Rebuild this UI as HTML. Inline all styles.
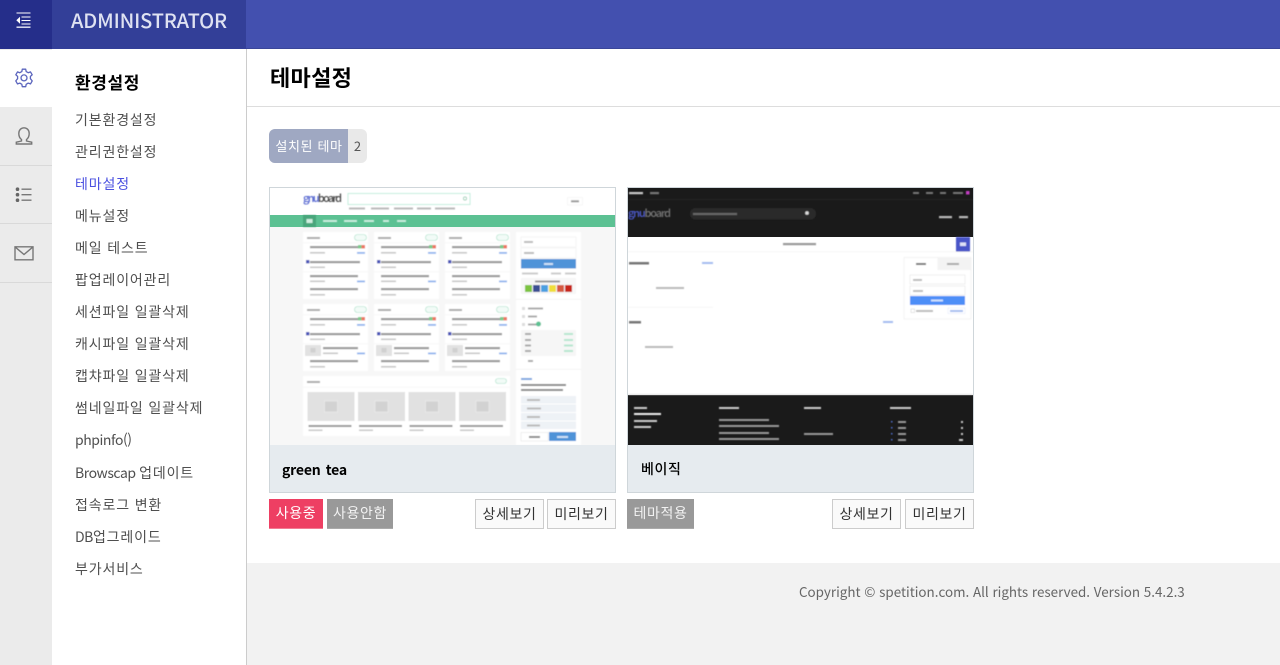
<!DOCTYPE html>
<html lang="ko"><head><meta charset="utf-8"><title>테마설정</title>
<style>
*{box-sizing:border-box}
html,body{margin:0;padding:0;width:1280px;height:665px;overflow:hidden;background:#fff;font-family:"Noto Sans CJK KR","Liberation Sans",sans-serif;color:#555}
.a{position:absolute}
.hd{left:0;top:0;width:1280px;height:49px;background:#4350af;border-bottom:1px solid #3a4699}
.m{left:75px;font-size:14px;letter-spacing:.85px;line-height:20px;color:#4f4f4f;white-space:nowrap}
.l{letter-spacing:-.45px}
.btn{height:30px;font-size:14px;line-height:28px;text-align:center;letter-spacing:.65px;white-space:nowrap}
.w{background:#fafafa;border:1px solid #ccc;color:#333}
.g{background:#999;color:#f2f2f2;border-bottom:1px solid #aaa}
.th{top:187px;width:347px;height:306px;border:1px solid #cfd6da;background:#e6ebef}
svg{display:block}
svg text{font-family:"Noto Sans CJK KR","Liberation Sans",sans-serif}
</style></head><body>
<div class="a hd"></div>
<div class="a" style="left:0;top:0;width:52px;height:49px;background:#252e8a"></div>
<div class="a" style="left:52px;top:0;width:194px;height:49px;background:#333f98"></div>
<svg class="a" style="left:14px;top:10px" width="18" height="20" viewBox="0 0 18 20"><path d="M2.500 3H16.500M7.500 7H16.500M7.500 10.500H16.500M7.500 14H16.500" stroke="#fff" stroke-width="1.100" fill="none"/><path d="M2.500 17.200H16.500" stroke="#dcdff0" stroke-width="1.500"/><path d="M6 6.800V13.800L2.300 10.300Z" fill="#fff"/></svg>
<div class="a" style="left:71px;top:6px;font-size:20px;font-weight:500;line-height:28px;color:#dfe2f2;letter-spacing:-.15px;white-space:nowrap">ADMINISTRATOR</div>

<div class="a" style="left:0;top:49px;width:52px;height:616px;background:#ebebeb"></div>
<div class="a" style="left:0;top:50px;width:52px;height:57px;background:#fff"></div>
<div class="a" style="left:0;top:165px;width:52px;height:1px;background:#d9d9d9"></div>
<div class="a" style="left:0;top:223px;width:52px;height:1px;background:#d9d9d9"></div>
<div class="a" style="left:0;top:282px;width:52px;height:1px;background:#d9d9d9"></div>
<div class="a" style="left:52px;top:49px;width:195px;height:616px;background:#fff;border-right:1px solid #ccc"></div>

<svg class="a" style="left:14px;top:67.500px" width="20" height="20" viewBox="0 0 20 20" fill="none" stroke="#5a64bd" stroke-width="1.300"><path d="M8.300 1.200H11.700L12.200 3.600L14.200 4.700L16.500 3.900L18.200 6.800L16.400 8.400V10.700L18.200 12.900L16.500 15.900L14.200 15.100L12.200 16.300L11.700 18.700H8.300L7.800 16.300L5.800 15.100L3.500 15.900L1.800 12.900L3.600 10.700V8.400L1.800 6.800L3.500 3.900L5.800 4.700L7.800 3.600Z" stroke-linejoin="round"/><circle cx="10" cy="9.900" r="3"/></svg>
<svg class="a" style="left:15px;top:126px" width="18" height="20" viewBox="0 0 18 20" fill="none" stroke="#777" stroke-width="1.400"><path d="M6.500 13.500C4.500 12 3.800 9.800 3.800 7.500C3.800 4 6 1.800 9 1.800S14.200 4 14.200 7.500C14.200 9.800 13.500 12 11.500 13.500V15L16.700 16.200V18H1.300V16.200L6.500 15Z"/></svg>
<svg class="a" style="left:15px;top:186px" width="18" height="18" viewBox="0 0 18 18"><g fill="#666"><circle cx="2.500" cy="3.200" r="1.800"/><circle cx="2.500" cy="8.700" r="1.800"/><circle cx="2.500" cy="14.200" r="1.800"/></g><path d="M6.500 3.200H16.500M6.500 8.700H16.500M6.500 14.200H16.500" stroke="#777" stroke-width="1.300"/></svg>
<svg class="a" style="left:14px;top:245px" width="20" height="16" viewBox="0 0 20 16" fill="none" stroke="#777" stroke-width="1.400"><path d="M1 1.800H19V14.800H1Z"/><path d="M1.500 2.300L10 9.500L18.500 2.300"/></svg>

<div class="a" style="left:75px;top:70px;font-size:17px;font-weight:700;line-height:24px;color:#000;white-space:nowrap;letter-spacing:.6px">환경설정</div>
<div class="a m" style="top:110px">기본환경설정</div>
<div class="a m" style="top:142px">관리권한설정</div>
<div class="a m" style="top:174px;color:#4a50e0">테마설정</div>
<div class="a m" style="top:206px">메뉴설정</div>
<div class="a m" style="top:238px">메일 테스트</div>
<div class="a m" style="top:270px">팝업레이어관리</div>
<div class="a m" style="top:302px">세션파일 일괄삭제</div>
<div class="a m" style="top:334px">캐시파일 일괄삭제</div>
<div class="a m" style="top:366px">캡챠파일 일괄삭제</div>
<div class="a m" style="top:398px">썸네일파일 일괄삭제</div>
<div class="a m l" style="top:430px">phpinfo()</div>
<div class="a m" style="top:463px"><span class="l">Browscap </span>업데이트</div>
<div class="a m" style="top:495px">접속로그 변환</div>
<div class="a m" style="top:527px"><span class="l">DB</span>업그레이드</div>
<div class="a m" style="top:559px">부가서비스</div>

<div class="a" style="left:270px;top:60px;font-size:22px;font-weight:700;line-height:34px;color:#000;letter-spacing:.3px;white-space:nowrap">테마설정</div>
<div class="a" style="left:247px;top:106px;width:1033px;height:1px;background:#ddd"></div>

<div class="a" style="left:269px;top:129px;width:98px;height:34px;border-radius:6px;background:#e9e9e9;overflow:hidden">
<div class="a" style="left:0;top:0;width:79px;height:34px;background:#9fa8c2;color:#fff;font-size:13px;line-height:33px;text-align:center;letter-spacing:.65px;padding-left:1px;white-space:nowrap">설치된 테마</div>
<div class="a" style="left:79px;top:0;width:19px;height:34px;color:#555;font-size:13px;line-height:33px;text-align:center">2</div>
</div>

<div class="a th" style="left:269px">
<svg class="a" style="left:0;top:0" width="345" height="257" viewBox="0 0 345 257">
<defs>
<filter id="b" x="-2%" y="-2%" width="104%" height="104%"><feGaussianBlur stdDeviation=".5"/></filter>
<g id="head"><rect width="65" height="67" fill="#fff"/><rect x="4" y="5" width="13" height="2" fill="#aaa"/><rect x="51.500" y="2.500" width="12" height="6" rx="3" fill="#f2fbf7" stroke="#a5e0c6" stroke-width=".6"/><rect x="0" y="10.500" width="65" height=".5" fill="#f1f1f1"/></g>
<g id="rows"><rect x="7" y="29" width="50" height="2.200" fill="#999"/><rect x="3" y="28" width="3.400" height="3.400" fill="#4a55b8"/><rect x="7" y="34.500" width="15" height="1.600" fill="#c8c8c8"/><rect y="39.500" width="65" height=".5" fill="#f1f1f1"/><rect x="7" y="56" width="48" height="2.200" fill="#999"/><rect x="7" y="62" width="15" height="1.600" fill="#c8c8c8"/></g>
<g id="top"><rect x="7" y="14" width="48" height="2.200" fill="#999"/><rect x="55" y="13" width="3.500" height="3.500" fill="#7ccb8c"/><rect x="58.500" y="13" width="3.500" height="3.500" fill="#ec7763"/><rect x="7" y="20" width="15" height="1.600" fill="#c8c8c8"/><rect x="54" y="20" width="8" height="1.800" fill="#8fb4ee"/></g>
<g id="c1"><use href="#head"/><use href="#top"/><use href="#rows"/><rect x="7" y="43" width="48" height="2.200" fill="#999"/><rect x="7" y="48.500" width="15" height="1.600" fill="#c8c8c8"/><rect x="54" y="48.500" width="8" height="1.800" fill="#8fb4ee"/></g>
<g id="c2"><use href="#head"/><use href="#top"/><use href="#rows"/><rect x="2" y="41" width="16" height="11" fill="#e2e2e2"/><rect x="7.500" y="44" width="5" height="4.500" fill="#d0d0d0"/><rect x="20" y="43" width="35" height="2.200" fill="#999"/><rect x="20" y="48.500" width="15" height="1.600" fill="#c8c8c8"/><rect x="54" y="48.500" width="8" height="1.800" fill="#8fb4ee"/></g>
<g id="pic"><rect width="47" height="29" fill="#e1e1e1"/><rect x="17" y="9" width="13" height="11" fill="#d2d2d2" stroke="#ececec" stroke-width=".7"/><rect x="1" y="33" width="43" height="2" fill="#999"/><rect x="1" y="37.500" width="14" height="1.500" fill="#c8c8c8"/></g>
</defs>
<rect width="345" height="257" fill="#f7f7f7"/>
<rect width="345" height="27" fill="#fff"/>
<rect y="27" width="345" height="12" fill="#5cc193"/>
<g filter="url(#b)">
<text x="33" y="14" font-size="11" font-weight="500" fill="#444" textLength="39"><tspan fill="#5566d0">gnu</tspan>board</text>
<rect x="78" y="5.500" width="122" height="11" fill="#fff" stroke="#c4eedd" stroke-width="1"/>
<circle cx="195" cy="10.500" r="1.600" fill="none" stroke="#86c7a8" stroke-width=".7"/>
<rect x="79" y="19.500" width="16" height="2" fill="#bbb"/><rect x="101" y="19.500" width="18" height="2" fill="#bbb"/><rect x="124" y="19.500" width="19" height="2" fill="#bbb"/><rect x="147" y="19.500" width="14" height="2" fill="#bbb"/><rect x="165" y="19.500" width="20" height="2" fill="#bbb"/>
<rect x="297.500" y="9.500" width="15" height="7.500" fill="#fff" stroke="#eee" stroke-width=".5"/><rect x="301" y="12.300" width="8" height="2" fill="#999"/>
<rect x="33" y="27" width="13" height="12" fill="#4aa67c"/><rect x="36.500" y="31" width="6" height="4" fill="#cfeee0"/>
<g fill="#cfeee0"><rect x="53" y="32" width="14" height="2"/><rect x="74" y="32" width="13" height="2"/><rect x="94" y="32" width="10" height="2"/><rect x="113" y="32" width="6" height="2"/><rect x="127" y="32" width="9" height="2"/></g>
<use href="#c1" x="33" y="44"/><use href="#c1" x="104" y="44"/><use href="#c1" x="175" y="44"/>
<use href="#c2" x="33" y="116"/><use href="#c2" x="104" y="116"/><use href="#c2" x="175" y="116"/>
<rect x="33" y="188" width="207" height="60" fill="#fff"/><rect x="37" y="193" width="13" height="2" fill="#aaa"/><rect x="225.500" y="190.500" width="11" height="5" rx="2.500" fill="#f2fbf7" stroke="#a5e0c6" stroke-width=".6"/><rect x="33" y="199" width="207" height=".5" fill="#f1f1f1"/>
<use href="#pic" x="37.500" y="204"/><use href="#pic" x="88" y="204"/><use href="#pic" x="138.500" y="204"/><use href="#pic" x="189" y="204"/>
<rect x="246" y="44" width="65" height="213" fill="#fff"/>
<rect x="251" y="49" width="55" height="10" fill="#fff" stroke="#eee" stroke-width=".6"/><rect x="251" y="60" width="55" height="10" fill="#fff" stroke="#eee" stroke-width=".6"/>
<rect x="254" y="53" width="9" height="2" fill="#bbb"/><rect x="254" y="64" width="10" height="2" fill="#bbb"/>
<rect x="251" y="71" width="55" height="9.500" fill="#4f93d8"/><rect x="274" y="75" width="9" height="2" fill="#cfe2f5"/>
<rect x="252" y="84.500" width="16" height="2" fill="#ccc"/><rect x="281" y="84.500" width="10" height="2" fill="#ccc"/><rect x="295" y="84.500" width="11" height="2" fill="#ccc"/>
<rect x="251" y="90" width="55" height="16" fill="#f7f7f7"/><rect x="265" y="92.500" width="25" height="2" fill="#999"/>
<rect x="255" y="97" width="7" height="7" fill="#7cc341"/><rect x="263" y="97" width="7" height="7" fill="#3b4f93"/><rect x="271" y="97" width="7" height="7" fill="#4c9fe0"/><rect x="279" y="97" width="7" height="7" fill="#f0de3a"/><rect x="287" y="97" width="7" height="7" fill="#d65a42"/><rect x="295" y="97" width="7" height="7" fill="#c8281e"/>
<rect x="246" y="111" width="65" height=".7" fill="#f0f0f0"/>
<rect x="258" y="119.500" width="15" height="2" fill="#aaa"/><rect x="252" y="119" width="3" height="3" fill="#ddd"/>
<rect x="258" y="127.500" width="9" height="2" fill="#aaa"/><rect x="252" y="127" width="3" height="3" fill="#ddd"/>
<rect x="258" y="135.500" width="9" height="2" fill="#aaa"/><circle cx="268.500" cy="136" r="2.500" fill="#5cc193"/><rect x="252" y="135" width="3" height="3" fill="#ddd"/>
<rect x="251" y="142" width="55" height="26" fill="#f6f6f6"/>
<g fill="#b5e6cf"><rect x="294" y="145" width="9" height="2"/><rect x="294" y="151" width="9" height="2"/><rect x="294" y="156.500" width="9" height="2"/><rect x="294" y="162" width="9" height="2"/></g>
<g fill="#aaa"><rect x="255" y="145" width="6" height="2"/><rect x="255" y="151" width="6" height="2"/><rect x="255" y="156.500" width="6" height="2"/><rect x="255" y="162" width="6" height="2"/><rect x="258" y="172" width="5" height="2"/></g>
<rect x="246" y="181" width="65" height=".7" fill="#f0f0f0"/>
<rect x="251" y="190" width="11" height="2" fill="#7aa5e0"/><rect x="251" y="196" width="45" height="2" fill="#888"/><rect x="251" y="201" width="42" height="2" fill="#888"/>
<rect x="251" y="208" width="55" height="7.500" fill="#eef2f6"/><rect x="251" y="216.500" width="55" height="7.500" fill="#eef2f6"/><rect x="251" y="225" width="55" height="7.500" fill="#eef2f6"/><rect x="251" y="233.500" width="55" height="7.500" fill="#eef2f6"/>
<g fill="#bbb"><rect x="257" y="211" width="13" height="2"/><rect x="257" y="219.500" width="14" height="2"/><rect x="257" y="228" width="13" height="2"/><rect x="257" y="236.500" width="13" height="2"/></g>
<rect x="251" y="244.500" width="27" height="8.500" fill="#fff" stroke="#e5e5e5" stroke-width=".6"/><rect x="279" y="244" width="27" height="9" fill="#4f93d8"/><rect x="259" y="248" width="11" height="2" fill="#888"/><rect x="287" y="248" width="11" height="2" fill="#cfe2f5"/>
</g>
</svg>
<div class="a" style="left:12px;top:271px;font-size:14px;font-weight:700;line-height:22px;color:#000;letter-spacing:-.2px;word-spacing:1.500px;white-space:nowrap">green tea</div>
</div>
<div class="a btn" style="left:269px;top:499px;width:54px;background:#ee3f63;color:#fff;border-bottom:1px solid #f27a92">사용중</div>
<div class="a btn g" style="left:327px;top:499px;width:66px">사용안함</div>
<div class="a btn w" style="left:475px;top:499px;width:69px">상세보기</div>
<div class="a btn w" style="left:547px;top:499px;width:69px">미리보기</div>

<div class="a th" style="left:627px">
<svg class="a" style="left:0;top:0" width="345" height="257" viewBox="0 0 345 257">
<rect width="345" height="257" fill="#fff"/>
<rect width="345" height="49" fill="#1a1a1a"/>
<rect y="207" width="345" height="50" fill="#1a1a1a"/>
<g filter="url(#b)">
<rect y="11" width="345" height=".6" fill="#2c2c2c"/>
<rect x="1" y="4" width="14" height="2.200" fill="#ccc"/><rect x="22" y="4" width="9" height="2.200" fill="#777"/>
<g fill="#777"><rect x="285" y="4" width="6" height="2"/><rect x="298" y="4" width="7" height="2"/><rect x="312" y="4" width="6" height="2"/><rect x="325" y="4" width="10" height="2"/></g><rect x="338" y="3" width="3.500" height="3.500" fill="#c23cc2"/>
<text x="0" y="29" font-size="11" font-weight="500" fill="#777" textLength="43"><tspan fill="#4d5bd0">gnu</tspan>board</text>
<rect x="62" y="20" width="126" height="11.500" rx="5.700" fill="#2c2c2c"/><rect x="65" y="25" width="44" height="2" fill="#666"/><circle cx="179" cy="25" r="1.800" fill="#ddd"/>
<rect x="311" y="28" width="13" height="2.200" fill="#bbb"/><rect x="331" y="28" width="9" height="2.200" fill="#bbb"/>
<rect x="155" y="55" width="33" height="2.200" fill="#999"/>
<rect x="328" y="49" width="14" height="14.500" fill="#4a55c8"/><rect x="332" y="54.500" width="6" height="3.500" fill="#dfe1f7"/>
<rect y="63.500" width="345" height=".6" fill="#f0f0f0"/>
<rect x="1" y="74" width="20" height="2.500" fill="#777"/><rect x="74" y="74" width="11" height="2" fill="#a5bdf0"/>
<rect x="28" y="99" width="28" height="2" fill="#bbb"/>
<rect y="119" width="85" height=".6" fill="#f0f0f0"/>
<rect x="276" y="69.500" width="67" height="61.500" fill="#fff" stroke="#eee" stroke-width=".7"/><rect x="309.500" y="70" width="33.500" height="12" fill="#f3f3f3"/>
<rect x="288" y="75" width="10" height="2" fill="#777"/><rect x="319" y="75" width="12" height="2" fill="#aaa"/>
<rect x="282" y="87" width="55" height="9" fill="#fff" stroke="#e5e5e5" stroke-width=".6"/><rect x="282" y="98" width="55" height="9" fill="#fff" stroke="#e5e5e5" stroke-width=".6"/>
<rect x="285" y="91" width="9" height="2" fill="#bbb"/><rect x="285" y="102" width="10" height="2" fill="#bbb"/>
<rect x="282" y="108" width="55" height="9" fill="#4d8ef7"/><rect x="303" y="111.500" width="12" height="2" fill="#cfe0fc"/>
<rect x="283" y="121" width="3.500" height="3.500" fill="#fff" stroke="#ccc" stroke-width=".5"/><rect x="288" y="122" width="17" height="2" fill="#bbb"/><rect x="320" y="120" width="17" height="5.500" fill="#fff" stroke="#dfe8fb" stroke-width=".5"/><rect x="322" y="122" width="13" height="2" fill="#a5bdf0"/>
<rect x="1" y="133" width="12" height="2.500" fill="#777"/><rect x="255" y="133" width="10" height="2" fill="#a5bdf0"/>
<rect x="17" y="158" width="28" height="2" fill="#bbb"/>
<rect y="206" width="345" height="1" fill="#ddd"/>
<g fill="#ccc"><rect x="6" y="219" width="13" height="2"/><rect x="6" y="225" width="27" height="2" fill="#eee"/><rect x="6" y="232" width="23" height="2"/><rect x="6" y="238" width="17" height="2"/>
<rect x="91" y="219" width="20" height="2"/><rect x="176" y="219" width="17" height="2"/><rect x="262" y="219" width="21" height="2"/></g>
<g fill="#999"><rect x="91" y="231" width="50" height="2"/><rect x="91" y="237" width="60" height="2"/><rect x="91" y="244" width="50" height="2"/><rect x="91" y="250" width="60" height="2"/><rect x="176" y="245" width="29" height="2"/>
<rect x="270" y="233" width="8" height="2"/><rect x="270" y="239" width="8" height="2"/><rect x="270" y="245" width="8" height="2"/><rect x="270" y="251" width="8" height="2"/></g>
<g fill="#ccc"><rect x="333" y="233" width="2" height="2"/><rect x="333" y="239" width="2" height="2"/><rect x="333" y="245" width="2" height="2"/><rect x="331" y="251" width="4" height="2"/></g>
<g fill="#4d6fd0"><rect x="263" y="233" width="1.500" height="1.500"/><rect x="263" y="239" width="1.500" height="1.500"/><rect x="263" y="245" width="1.500" height="1.500"/><rect x="263" y="251" width="1.500" height="1.500"/></g>
</g>
</svg>
<div class="a" style="left:13px;top:270px;font-size:14px;font-weight:500;line-height:22px;color:#000;letter-spacing:.6px;white-space:nowrap">베이직</div>
</div>
<div class="a btn g" style="left:627px;top:499px;width:67px">테마적용</div>
<div class="a btn w" style="left:832px;top:499px;width:69px">상세보기</div>
<div class="a btn w" style="left:905px;top:499px;width:69px">미리보기</div>

<div class="a" style="left:247px;top:563px;width:1033px;height:102px;background:#f2f2f2"></div>
<div class="a" style="left:799px;top:581px;font-size:13.400px;line-height:20px;color:#666;white-space:nowrap">Copyright © spetition.com. All rights reserved. Version 5.4.2.3</div>
</body></html>
